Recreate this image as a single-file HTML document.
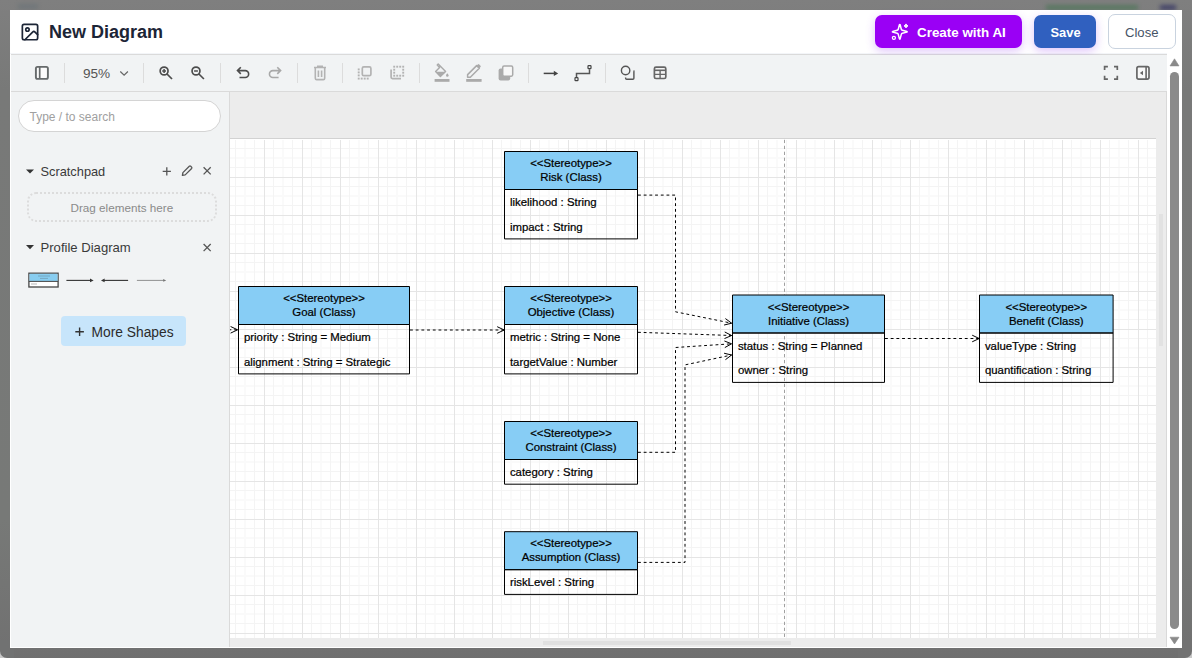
<!DOCTYPE html>
<html><head><meta charset="utf-8"><style>
*{box-sizing:border-box}
html,body{margin:0;padding:0}
body{width:1192px;height:658px;overflow:hidden;background:linear-gradient(#7f7f7f 0px,#787978 90px,#777977 520px,#717171 648px,#6f6f6f 658px);position:relative;font-family:"Liberation Sans", sans-serif}
.abs{position:absolute}
</style></head><body>
<div class="abs" style="left:0;top:648px;width:14px;height:10px;background:#c9c9c9"></div>
<div class="abs" style="left:0;top:640px;width:14px;height:18px;background:#717272;border-bottom-left-radius:7px"></div>
<div class="abs" style="left:1178px;top:648px;width:14px;height:10px;background:#c9c9c9"></div>
<div class="abs" style="left:1178px;top:640px;width:14px;height:18px;background:#727272;border-bottom-right-radius:7px"></div>
<div class="abs" style="left:1046px;top:5px;width:92px;height:5px;background:#4f7659;filter:blur(2px);opacity:.8"></div>
<div class="abs" style="left:1160px;top:5px;width:16px;height:5px;background:#3c3c66;filter:blur(2px);opacity:.9"></div>
<div class="abs" style="left:18px;top:4px;width:20px;height:5px;background:#6a7378;filter:blur(2px);opacity:.7"></div>
<div class="abs" style="left:10px;top:10px;width:1172px;height:638px;background:#fff"></div>
<!-- header -->
<div class="abs" style="left:10px;top:53px;width:1157px;height:1px;background:#f3f5f8"></div>
<div class="abs" style="left:11px;top:54px;width:1156px;height:1px;background:#dadada"></div>
<div class="abs" style="left:49px;top:19px;font-size:18px;font-weight:bold;color:#1c2536;line-height:26px;white-space:nowrap">New Diagram</div>
<div class="abs" style="left:875px;top:15px;width:147px;height:33px;border-radius:7px;background:#9a00f5;box-shadow:0 3px 10px rgba(150,60,240,.3)"></div>
<div class="abs" style="left:917px;top:24px;font-size:13.4px;font-weight:bold;color:#fff;line-height:17px;white-space:nowrap">Create with AI</div>
<div class="abs" style="left:1034px;top:15px;width:62px;height:33px;border-radius:7px;background:#3060bf;box-shadow:0 3px 10px rgba(150,60,240,.3)"></div>
<div class="abs" style="left:1050.5px;top:24px;font-size:12.9px;font-weight:bold;color:#fff;line-height:17px;white-space:nowrap">Save</div>
<div class="abs" style="left:1108px;top:14px;width:68px;height:35px;border-radius:7px;background:#fff;border:1px solid #c9d3df"></div>
<div class="abs" style="left:1125px;top:24px;font-size:13.1px;color:#465366;line-height:17px;white-space:nowrap">Close</div>
<!-- toolbar -->
<div class="abs" style="left:11px;top:55px;width:1156px;height:36px;background:#f1f3f4"></div>
<div class="abs" style="left:11px;top:91px;width:1156px;height:1px;background:#dadada"></div>
<div class="abs" style="left:83px;top:66px;font-size:13.6px;color:#555;line-height:16px;white-space:nowrap">95%</div>
<!-- sidebar -->
<div class="abs" style="left:11px;top:92px;width:218px;height:555px;background:#f1f3f4"></div>
<div class="abs" style="left:229px;top:92px;width:1px;height:555px;background:#dadada"></div>
<div class="abs" style="left:18px;top:100px;width:203px;height:32px;border-radius:16px;background:#fff;border:1px solid #d4d4d4"></div>
<div class="abs" style="left:29.5px;top:109.6px;font-size:12px;color:#a0a0a0;line-height:15px;white-space:nowrap">Type / to search</div>
<div class="abs" style="left:40.5px;top:164px;font-size:12.8px;color:#3a3a3a;line-height:16px;white-space:nowrap">Scratchpad</div>
<div class="abs" style="left:27px;top:192px;width:190px;height:30px;border-radius:9px;border:2px dotted #dcdcdc"></div>
<div class="abs" style="left:70.5px;top:200px;font-size:11.7px;color:#8a8a8a;line-height:15px;white-space:nowrap">Drag elements here</div>
<div class="abs" style="left:40.5px;top:240px;font-size:13.1px;color:#3a3a3a;line-height:16px;white-space:nowrap">Profile Diagram</div>
<div class="abs" style="left:61px;top:316px;width:125px;height:30px;border-radius:4px;background:#c7e5fb"></div>
<div class="abs" style="left:91.5px;top:323.7px;font-size:13.8px;color:#2b2b2b;line-height:17px;white-space:nowrap">More Shapes</div>
<!-- canvas -->
<div class="abs" style="left:230px;top:92px;width:937px;height:555px;background:#ececec"></div>
<svg class="abs" style="left:0;top:0" width="1192" height="658" viewBox="0 0 1192 658">
<defs><clipPath id="cv"><rect x="230" y="92" width="937" height="555"/></clipPath></defs>
<g clip-path="url(#cv)">
<rect x="230" y="138" width="926" height="1" fill="#d2d2d2"/>
<rect x="230" y="139" width="926" height="499" fill="#ffffff"/>
<rect x="244" y="140" width="1" height="498" fill="#fafafa"/>
<rect x="245" y="140" width="1" height="498" fill="#fafafa"/>
<rect x="282" y="140" width="1" height="498" fill="#fafafa"/>
<rect x="283" y="140" width="1" height="498" fill="#fafafa"/>
<rect x="320" y="140" width="1" height="498" fill="#fafafa"/>
<rect x="321" y="140" width="1" height="498" fill="#fafafa"/>
<rect x="358" y="140" width="1" height="498" fill="#fafafa"/>
<rect x="359" y="140" width="1" height="498" fill="#fafafa"/>
<rect x="396" y="140" width="1" height="498" fill="#fafafa"/>
<rect x="397" y="140" width="1" height="498" fill="#fafafa"/>
<rect x="434" y="140" width="1" height="498" fill="#fafafa"/>
<rect x="435" y="140" width="1" height="498" fill="#fafafa"/>
<rect x="472" y="140" width="1" height="498" fill="#fafafa"/>
<rect x="473" y="140" width="1" height="498" fill="#fafafa"/>
<rect x="510" y="140" width="1" height="498" fill="#fafafa"/>
<rect x="511" y="140" width="1" height="498" fill="#fafafa"/>
<rect x="548" y="140" width="1" height="498" fill="#fafafa"/>
<rect x="549" y="140" width="1" height="498" fill="#fafafa"/>
<rect x="586" y="140" width="1" height="498" fill="#fafafa"/>
<rect x="587" y="140" width="1" height="498" fill="#fafafa"/>
<rect x="624" y="140" width="1" height="498" fill="#fafafa"/>
<rect x="625" y="140" width="1" height="498" fill="#fafafa"/>
<rect x="662" y="140" width="1" height="498" fill="#fafafa"/>
<rect x="663" y="140" width="1" height="498" fill="#fafafa"/>
<rect x="700" y="140" width="1" height="498" fill="#fafafa"/>
<rect x="701" y="140" width="1" height="498" fill="#fafafa"/>
<rect x="738" y="140" width="1" height="498" fill="#fafafa"/>
<rect x="739" y="140" width="1" height="498" fill="#fafafa"/>
<rect x="776" y="140" width="1" height="498" fill="#fafafa"/>
<rect x="777" y="140" width="1" height="498" fill="#fafafa"/>
<rect x="814" y="140" width="1" height="498" fill="#fafafa"/>
<rect x="815" y="140" width="1" height="498" fill="#fafafa"/>
<rect x="852" y="140" width="1" height="498" fill="#fafafa"/>
<rect x="853" y="140" width="1" height="498" fill="#fafafa"/>
<rect x="890" y="140" width="1" height="498" fill="#fafafa"/>
<rect x="891" y="140" width="1" height="498" fill="#fafafa"/>
<rect x="928" y="140" width="1" height="498" fill="#fafafa"/>
<rect x="929" y="140" width="1" height="498" fill="#fafafa"/>
<rect x="966" y="140" width="1" height="498" fill="#fafafa"/>
<rect x="967" y="140" width="1" height="498" fill="#fafafa"/>
<rect x="1004" y="140" width="1" height="498" fill="#fafafa"/>
<rect x="1005" y="140" width="1" height="498" fill="#fafafa"/>
<rect x="1042" y="140" width="1" height="498" fill="#fafafa"/>
<rect x="1043" y="140" width="1" height="498" fill="#fafafa"/>
<rect x="1080" y="140" width="1" height="498" fill="#fafafa"/>
<rect x="1081" y="140" width="1" height="498" fill="#fafafa"/>
<rect x="1118" y="140" width="1" height="498" fill="#fafafa"/>
<rect x="1119" y="140" width="1" height="498" fill="#fafafa"/>
<rect x="230" y="157" width="926" height="1" fill="#fafafa"/>
<rect x="230" y="158" width="926" height="1" fill="#fafafa"/>
<rect x="230" y="195" width="926" height="1" fill="#fafafa"/>
<rect x="230" y="196" width="926" height="1" fill="#fafafa"/>
<rect x="230" y="233" width="926" height="1" fill="#fafafa"/>
<rect x="230" y="234" width="926" height="1" fill="#fafafa"/>
<rect x="230" y="271" width="926" height="1" fill="#fafafa"/>
<rect x="230" y="272" width="926" height="1" fill="#fafafa"/>
<rect x="230" y="309" width="926" height="1" fill="#fafafa"/>
<rect x="230" y="310" width="926" height="1" fill="#fafafa"/>
<rect x="230" y="347" width="926" height="1" fill="#fafafa"/>
<rect x="230" y="348" width="926" height="1" fill="#fafafa"/>
<rect x="230" y="385" width="926" height="1" fill="#fafafa"/>
<rect x="230" y="386" width="926" height="1" fill="#fafafa"/>
<rect x="230" y="423" width="926" height="1" fill="#fafafa"/>
<rect x="230" y="424" width="926" height="1" fill="#fafafa"/>
<rect x="230" y="461" width="926" height="1" fill="#fafafa"/>
<rect x="230" y="462" width="926" height="1" fill="#fafafa"/>
<rect x="230" y="499" width="926" height="1" fill="#fafafa"/>
<rect x="230" y="500" width="926" height="1" fill="#fafafa"/>
<rect x="230" y="537" width="926" height="1" fill="#fafafa"/>
<rect x="230" y="538" width="926" height="1" fill="#fafafa"/>
<rect x="230" y="575" width="926" height="1" fill="#fafafa"/>
<rect x="230" y="576" width="926" height="1" fill="#fafafa"/>
<rect x="230" y="613" width="926" height="1" fill="#fafafa"/>
<rect x="230" y="614" width="926" height="1" fill="#fafafa"/>
<rect x="235" y="140" width="1" height="498" fill="#f4f4f4"/>
<rect x="254" y="140" width="1" height="498" fill="#f4f4f4"/>
<rect x="273" y="140" width="1" height="498" fill="#f4f4f4"/>
<rect x="292" y="140" width="1" height="498" fill="#f4f4f4"/>
<rect x="311" y="140" width="1" height="498" fill="#f4f4f4"/>
<rect x="330" y="140" width="1" height="498" fill="#f4f4f4"/>
<rect x="349" y="140" width="1" height="498" fill="#f4f4f4"/>
<rect x="368" y="140" width="1" height="498" fill="#f4f4f4"/>
<rect x="387" y="140" width="1" height="498" fill="#f4f4f4"/>
<rect x="406" y="140" width="1" height="498" fill="#f4f4f4"/>
<rect x="425" y="140" width="1" height="498" fill="#f4f4f4"/>
<rect x="444" y="140" width="1" height="498" fill="#f4f4f4"/>
<rect x="463" y="140" width="1" height="498" fill="#f4f4f4"/>
<rect x="482" y="140" width="1" height="498" fill="#f4f4f4"/>
<rect x="501" y="140" width="1" height="498" fill="#f4f4f4"/>
<rect x="520" y="140" width="1" height="498" fill="#f4f4f4"/>
<rect x="539" y="140" width="1" height="498" fill="#f4f4f4"/>
<rect x="558" y="140" width="1" height="498" fill="#f4f4f4"/>
<rect x="577" y="140" width="1" height="498" fill="#f4f4f4"/>
<rect x="596" y="140" width="1" height="498" fill="#f4f4f4"/>
<rect x="615" y="140" width="1" height="498" fill="#f4f4f4"/>
<rect x="634" y="140" width="1" height="498" fill="#f4f4f4"/>
<rect x="653" y="140" width="1" height="498" fill="#f4f4f4"/>
<rect x="672" y="140" width="1" height="498" fill="#f4f4f4"/>
<rect x="691" y="140" width="1" height="498" fill="#f4f4f4"/>
<rect x="710" y="140" width="1" height="498" fill="#f4f4f4"/>
<rect x="729" y="140" width="1" height="498" fill="#f4f4f4"/>
<rect x="748" y="140" width="1" height="498" fill="#f4f4f4"/>
<rect x="767" y="140" width="1" height="498" fill="#f4f4f4"/>
<rect x="786" y="140" width="1" height="498" fill="#f4f4f4"/>
<rect x="805" y="140" width="1" height="498" fill="#f4f4f4"/>
<rect x="824" y="140" width="1" height="498" fill="#f4f4f4"/>
<rect x="843" y="140" width="1" height="498" fill="#f4f4f4"/>
<rect x="862" y="140" width="1" height="498" fill="#f4f4f4"/>
<rect x="881" y="140" width="1" height="498" fill="#f4f4f4"/>
<rect x="900" y="140" width="1" height="498" fill="#f4f4f4"/>
<rect x="919" y="140" width="1" height="498" fill="#f4f4f4"/>
<rect x="938" y="140" width="1" height="498" fill="#f4f4f4"/>
<rect x="957" y="140" width="1" height="498" fill="#f4f4f4"/>
<rect x="976" y="140" width="1" height="498" fill="#f4f4f4"/>
<rect x="995" y="140" width="1" height="498" fill="#f4f4f4"/>
<rect x="1014" y="140" width="1" height="498" fill="#f4f4f4"/>
<rect x="1033" y="140" width="1" height="498" fill="#f4f4f4"/>
<rect x="1052" y="140" width="1" height="498" fill="#f4f4f4"/>
<rect x="1071" y="140" width="1" height="498" fill="#f4f4f4"/>
<rect x="1090" y="140" width="1" height="498" fill="#f4f4f4"/>
<rect x="1109" y="140" width="1" height="498" fill="#f4f4f4"/>
<rect x="1128" y="140" width="1" height="498" fill="#f4f4f4"/>
<rect x="1147" y="140" width="1" height="498" fill="#f4f4f4"/>
<rect x="230" y="148" width="926" height="1" fill="#f4f4f4"/>
<rect x="230" y="167" width="926" height="1" fill="#f4f4f4"/>
<rect x="230" y="186" width="926" height="1" fill="#f4f4f4"/>
<rect x="230" y="205" width="926" height="1" fill="#f4f4f4"/>
<rect x="230" y="224" width="926" height="1" fill="#f4f4f4"/>
<rect x="230" y="243" width="926" height="1" fill="#f4f4f4"/>
<rect x="230" y="262" width="926" height="1" fill="#f4f4f4"/>
<rect x="230" y="281" width="926" height="1" fill="#f4f4f4"/>
<rect x="230" y="300" width="926" height="1" fill="#f4f4f4"/>
<rect x="230" y="319" width="926" height="1" fill="#f4f4f4"/>
<rect x="230" y="338" width="926" height="1" fill="#f4f4f4"/>
<rect x="230" y="357" width="926" height="1" fill="#f4f4f4"/>
<rect x="230" y="376" width="926" height="1" fill="#f4f4f4"/>
<rect x="230" y="395" width="926" height="1" fill="#f4f4f4"/>
<rect x="230" y="414" width="926" height="1" fill="#f4f4f4"/>
<rect x="230" y="433" width="926" height="1" fill="#f4f4f4"/>
<rect x="230" y="452" width="926" height="1" fill="#f4f4f4"/>
<rect x="230" y="471" width="926" height="1" fill="#f4f4f4"/>
<rect x="230" y="490" width="926" height="1" fill="#f4f4f4"/>
<rect x="230" y="509" width="926" height="1" fill="#f4f4f4"/>
<rect x="230" y="528" width="926" height="1" fill="#f4f4f4"/>
<rect x="230" y="547" width="926" height="1" fill="#f4f4f4"/>
<rect x="230" y="566" width="926" height="1" fill="#f4f4f4"/>
<rect x="230" y="585" width="926" height="1" fill="#f4f4f4"/>
<rect x="230" y="604" width="926" height="1" fill="#f4f4f4"/>
<rect x="230" y="623" width="926" height="1" fill="#f4f4f4"/>
<rect x="264" y="140" width="1" height="498" fill="#e5e5e5"/>
<rect x="302" y="140" width="1" height="498" fill="#e5e5e5"/>
<rect x="340" y="140" width="1" height="498" fill="#e5e5e5"/>
<rect x="378" y="140" width="1" height="498" fill="#e5e5e5"/>
<rect x="416" y="140" width="1" height="498" fill="#e5e5e5"/>
<rect x="454" y="140" width="1" height="498" fill="#e5e5e5"/>
<rect x="492" y="140" width="1" height="498" fill="#e5e5e5"/>
<rect x="530" y="140" width="1" height="498" fill="#e5e5e5"/>
<rect x="568" y="140" width="1" height="498" fill="#e5e5e5"/>
<rect x="606" y="140" width="1" height="498" fill="#e5e5e5"/>
<rect x="644" y="140" width="1" height="498" fill="#e5e5e5"/>
<rect x="682" y="140" width="1" height="498" fill="#e5e5e5"/>
<rect x="720" y="140" width="1" height="498" fill="#e5e5e5"/>
<rect x="758" y="140" width="1" height="498" fill="#e5e5e5"/>
<rect x="796" y="140" width="1" height="498" fill="#e5e5e5"/>
<rect x="834" y="140" width="1" height="498" fill="#e5e5e5"/>
<rect x="872" y="140" width="1" height="498" fill="#e5e5e5"/>
<rect x="910" y="140" width="1" height="498" fill="#e5e5e5"/>
<rect x="948" y="140" width="1" height="498" fill="#e5e5e5"/>
<rect x="986" y="140" width="1" height="498" fill="#e5e5e5"/>
<rect x="1024" y="140" width="1" height="498" fill="#e5e5e5"/>
<rect x="1062" y="140" width="1" height="498" fill="#e5e5e5"/>
<rect x="1100" y="140" width="1" height="498" fill="#e5e5e5"/>
<rect x="1138" y="140" width="1" height="498" fill="#e5e5e5"/>
<rect x="230" y="177" width="926" height="1" fill="#e5e5e5"/>
<rect x="230" y="215" width="926" height="1" fill="#e5e5e5"/>
<rect x="230" y="253" width="926" height="1" fill="#e5e5e5"/>
<rect x="230" y="291" width="926" height="1" fill="#e5e5e5"/>
<rect x="230" y="329" width="926" height="1" fill="#e5e5e5"/>
<rect x="230" y="367" width="926" height="1" fill="#e5e5e5"/>
<rect x="230" y="405" width="926" height="1" fill="#e5e5e5"/>
<rect x="230" y="443" width="926" height="1" fill="#e5e5e5"/>
<rect x="230" y="481" width="926" height="1" fill="#e5e5e5"/>
<rect x="230" y="519" width="926" height="1" fill="#e5e5e5"/>
<rect x="230" y="557" width="926" height="1" fill="#e5e5e5"/>
<rect x="230" y="595" width="926" height="1" fill="#e5e5e5"/>
<rect x="230" y="633" width="926" height="1" fill="#e5e5e5"/>
<line x1="784.5" y1="139.8" x2="784.5" y2="638" stroke="#a0a0a0" stroke-width="1" stroke-dasharray="3.3 2.65"/>
<g font-family='"Liberation Sans", sans-serif' font-size="11.4" fill="#000" stroke="#000" stroke-width="0.22">
<rect x="238.5" y="286.5" width="171.0" height="38" fill="#87cdf5" stroke="#000" stroke-width="1" stroke-linejoin="round"/>
<rect x="238.5" y="324.5" width="171.0" height="49.39999999999998" fill="none" stroke="#000" stroke-width="1" stroke-linejoin="round"/>
<text x="324.0" y="301.9" text-anchor="middle">&lt;&lt;Stereotype&gt;&gt;</text>
<text x="324.0" y="316" text-anchor="middle">Goal (Class)</text>
<text x="243.9" y="341.1">priority : String = Medium</text>
<text x="243.9" y="365.8">alignment : String = Strategic</text>
<rect x="504.5" y="151.5" width="133.0" height="38" fill="#87cdf5" stroke="#000" stroke-width="1" stroke-linejoin="round"/>
<rect x="504.5" y="189.5" width="133.0" height="49.400000000000006" fill="none" stroke="#000" stroke-width="1" stroke-linejoin="round"/>
<text x="571.0" y="166.9" text-anchor="middle">&lt;&lt;Stereotype&gt;&gt;</text>
<text x="571.0" y="181" text-anchor="middle">Risk (Class)</text>
<text x="509.9" y="206.1">likelihood : String</text>
<text x="509.9" y="230.79999999999998">impact : String</text>
<rect x="504.5" y="286.5" width="133.0" height="38" fill="#87cdf5" stroke="#000" stroke-width="1" stroke-linejoin="round"/>
<rect x="504.5" y="324.5" width="133.0" height="49.39999999999998" fill="none" stroke="#000" stroke-width="1" stroke-linejoin="round"/>
<text x="571.0" y="301.9" text-anchor="middle">&lt;&lt;Stereotype&gt;&gt;</text>
<text x="571.0" y="316" text-anchor="middle">Objective (Class)</text>
<text x="509.9" y="341.1">metric : String = None</text>
<text x="509.9" y="365.8">targetValue : Number</text>
<rect x="504.5" y="421.5" width="133.0" height="38" fill="#87cdf5" stroke="#000" stroke-width="1" stroke-linejoin="round"/>
<rect x="504.5" y="459.5" width="133.0" height="24.69999999999999" fill="none" stroke="#000" stroke-width="1" stroke-linejoin="round"/>
<text x="571.0" y="436.9" text-anchor="middle">&lt;&lt;Stereotype&gt;&gt;</text>
<text x="571.0" y="451" text-anchor="middle">Constraint (Class)</text>
<text x="509.9" y="476.1">category : String</text>
<rect x="504.5" y="531.7" width="133.0" height="38" fill="#87cdf5" stroke="#000" stroke-width="1" stroke-linejoin="round"/>
<rect x="504.5" y="569.7" width="133.0" height="24.700000000000045" fill="none" stroke="#000" stroke-width="1" stroke-linejoin="round"/>
<text x="571.0" y="547.1" text-anchor="middle">&lt;&lt;Stereotype&gt;&gt;</text>
<text x="571.0" y="561.2" text-anchor="middle">Assumption (Class)</text>
<text x="509.9" y="586.3000000000001">riskLevel : String</text>
<rect x="732.5" y="295.0" width="152.0" height="38" fill="#87cdf5" stroke="#000" stroke-width="1" stroke-linejoin="round"/>
<rect x="732.5" y="333.0" width="152.0" height="49.39999999999998" fill="none" stroke="#000" stroke-width="1" stroke-linejoin="round"/>
<text x="808.5" y="310.95" text-anchor="middle">&lt;&lt;Stereotype&gt;&gt;</text>
<text x="808.5" y="324.5" text-anchor="middle">Initiative (Class)</text>
<text x="737.9" y="349.6">status : String = Planned</text>
<text x="737.9" y="374.3">owner : String</text>
<rect x="979.5" y="295.0" width="133.5999999999999" height="38" fill="#87cdf5" stroke="#000" stroke-width="1" stroke-linejoin="round"/>
<rect x="979.5" y="333.0" width="133.5999999999999" height="49.39999999999998" fill="none" stroke="#000" stroke-width="1" stroke-linejoin="round"/>
<text x="1046.3" y="310.95" text-anchor="middle">&lt;&lt;Stereotype&gt;&gt;</text>
<text x="1046.3" y="324.5" text-anchor="middle">Benefit (Class)</text>
<text x="984.9" y="349.6">valueType : String</text>
<text x="984.9" y="374.3">quantification : String</text>
</g>
<path d="M638 195.1 L675.5 195.1 L675.5 311.8 L731.6 323.2" fill="none" stroke="#000" stroke-width="1" stroke-dasharray="2.85 2.85"/><path d="M724.08 325.04 L731.60 323.20 L725.40 318.57" fill="none" stroke="#000" stroke-width="1" stroke-linejoin="miter"/>
<path d="M638 332.3 L731.6 335.5" fill="none" stroke="#000" stroke-width="1" stroke-dasharray="2.85 2.85"/><path d="M724.49 338.56 L731.60 335.50 L724.72 331.96" fill="none" stroke="#000" stroke-width="1" stroke-linejoin="miter"/>
<path d="M638 452.3 L675.5 452.3 L675.5 347.5 L731.6 343.8" fill="none" stroke="#000" stroke-width="1" stroke-dasharray="2.85 2.85"/><path d="M724.83 347.55 L731.60 343.80 L724.40 340.97" fill="none" stroke="#000" stroke-width="1" stroke-linejoin="miter"/>
<path d="M638 562.4 L685 562.4 L685 364.9 L731.6 355" fill="none" stroke="#000" stroke-width="1" stroke-dasharray="2.85 2.85"/><path d="M725.44 359.68 L731.60 355.00 L724.07 353.23" fill="none" stroke="#000" stroke-width="1" stroke-linejoin="miter"/>
<path d="M410 330 L504.2 330" fill="none" stroke="#000" stroke-width="1" stroke-dasharray="2.85 2.85"/><path d="M497.20 333.30 L504.20 330.00 L497.20 326.70" fill="none" stroke="#000" stroke-width="1" stroke-linejoin="miter"/>
<path d="M885 338.5 L979.2 338.5" fill="none" stroke="#000" stroke-width="1" stroke-dasharray="2.85 2.85"/><path d="M972.20 341.80 L979.20 338.50 L972.20 335.20" fill="none" stroke="#000" stroke-width="1" stroke-linejoin="miter"/>
<path d="M200 329.8 L237.6 329.8" fill="none" stroke="#000" stroke-width="1" stroke-dasharray="2.85 2.85"/><path d="M230.60 333.10 L237.60 329.80 L230.60 326.50" fill="none" stroke="#000" stroke-width="1" stroke-linejoin="miter"/>
</g>
</svg>
<!-- scrollbars -->
<div class="abs" style="left:1167px;top:55px;width:15px;height:592px;background:#fff"></div>
<div class="abs" style="left:1170px;top:71.5px;width:9px;height:557px;border-radius:4.5px;background:#8a8a8a"></div>
<div class="abs" style="left:543px;top:641px;width:248px;height:4px;background:#e0e0e0"></div>
<div class="abs" style="left:1159px;top:214px;width:4px;height:132px;background:#e2e2e2"></div>
<div class="abs" style="left:1166px;top:91px;width:1px;height:556px;background:#d9d9d9"></div>
<svg class="abs" style="left:0;top:0;pointer-events:none" width="1192" height="658" viewBox="0 0 1192 658">
<!-- header image icon -->
<g transform="translate(19.8,21.9) scale(0.85)" fill="none" stroke="#1c2536" stroke-width="2" stroke-linecap="round" stroke-linejoin="round">
<rect x="3" y="3" width="18" height="18" rx="2"/><circle cx="9" cy="9" r="2"/><path d="m21 15-3.086-3.086a2 2 0 0 0-2.828 0L6 21"/>
</g>
<!-- sparkles -->
<g fill="none" stroke="#fff" stroke-width="1.5" stroke-linejoin="round" stroke-linecap="round">
<path transform="translate(890.9,22.9) scale(0.74)" stroke-width="2.03" d="M9.937 15.5A2 2 0 0 0 8.5 14.063l-6.135-1.582a.5.5 0 0 1 0-.962L8.5 9.936A2 2 0 0 0 9.937 8.5l1.582-6.135a.5.5 0 0 1 .963 0L14.063 8.5A2 2 0 0 0 15.5 9.937l6.135 1.581a.5.5 0 0 1 0 .964L15.5 14.063a2 2 0 0 0-1.437 1.437l-1.582 6.135a.5.5 0 0 1-.963 0z"/>
<circle cx="893.9" cy="37.8" r="1.55" stroke-width="1.25"/>
</g>
<path d="M906 23.9 Q906.3 25.6 908 25.9 Q906.3 26.2 906 27.9 Q905.7 26.2 904 25.9 Q905.7 25.6 906 23.9Z" fill="#fff" stroke="#fff" stroke-width="1" stroke-linejoin="round"/>
<!-- toolbar separators -->
<g fill="#dcdcdc">
<rect x="64" y="63" width="1" height="20"/><rect x="143" y="63" width="1" height="20"/><rect x="220" y="63" width="1" height="20"/>
<rect x="297" y="63" width="1" height="20"/><rect x="342" y="63" width="1" height="20"/><rect x="419" y="63" width="1" height="20"/>
<rect x="528" y="63" width="1" height="20"/><rect x="605" y="63" width="1" height="20"/>
</g>
<!-- sidebar toggle -->
<rect x="35.9" y="66.9" width="12" height="12" rx="1.6" fill="#fbfbfb" stroke="#666a6b" stroke-width="1.9"/>
<line x1="39.7" y1="67" x2="39.7" y2="79" stroke="#666a6b" stroke-width="1.7"/>
<!-- chevron -->
<path d="M120.3 71.5 L124.1 75.2 L127.9 71.5" fill="none" stroke="#666" stroke-width="1.2"/>
<!-- zoom in/out -->
<g fill="none" stroke="#4d4d4d" stroke-width="1.7">
<circle cx="164.1" cy="71" r="3.95"/><path d="M167 74 L172 79"/><path d="M162.2 71 H166 M164.1 69.1 V72.9" stroke-width="1.5"/>
<circle cx="196" cy="71" r="3.95"/><path d="M198.9 74 L203.9 79"/><path d="M194.1 71 H197.9" stroke-width="1.5"/>
</g>
<!-- undo redo -->
<path d="M240.8 67.3 L237.5 70.6 L240.8 73.9 M237.5 70.6 H245.2 A3.45 3.45 0 0 1 245.2 77.5 H239.5" fill="none" stroke="#4d4d4d" stroke-width="1.6"/>
<path d="M277.3 67.3 L280.6 70.6 L277.3 73.9 M280.6 70.6 H272.9 A3.45 3.45 0 0 0 272.9 77.5 H278.6" fill="none" stroke="#a8a8a8" stroke-width="1.6"/>
<!-- trash -->
<g fill="none" stroke="#b3b3b3" stroke-width="1.6">
<path d="M314 67.5 H326 M317.8 67.5 V66.2 H322.2 V67.5"/>
<path d="M315.3 68 V78.2 Q315.3 79.6 316.7 79.6 H323.3 Q324.7 79.6 324.7 78.2 V68"/>
<path d="M318.4 70.5 V77 M321.6 70.5 V77"/>
</g>
<!-- to front -->
<rect x="362.3" y="66.9" width="8.6" height="8.8" rx="1.5" fill="none" stroke="#b3b3b3" stroke-width="1.7"/>
<g fill="#b3b3b3">
<rect x="357.75" y="68.45" width="1.9" height="1.9"/><rect x="357.75" y="71.45" width="1.9" height="1.9"/><rect x="357.75" y="74.45" width="1.9" height="1.9"/>
<rect x="357.75" y="77.65" width="1.9" height="1.9"/><rect x="360.75" y="77.65" width="1.9" height="1.9"/><rect x="363.75" y="77.65" width="1.9" height="1.9"/><rect x="366.75" y="77.65" width="1.9" height="1.9"/>
</g>
<!-- to back -->
<path d="M391.1 69.5 V77.3 Q391.1 78.6 392.4 78.6 H401" fill="none" stroke="#b3b3b3" stroke-width="1.7"/>
<g fill="#b3b3b3">
<rect x="393.25" y="65.75" width="1.9" height="1.9"/><rect x="396.25" y="65.75" width="1.9" height="1.9"/><rect x="399.25" y="65.75" width="1.9" height="1.9"/><rect x="402.25" y="65.75" width="1.9" height="1.9"/>
<rect x="402.25" y="68.75" width="1.9" height="1.9"/><rect x="402.25" y="71.75" width="1.9" height="1.9"/><rect x="402.25" y="74.75" width="1.9" height="1.9"/>
<rect x="393.25" y="68.75" width="1.9" height="1.9"/><rect x="393.25" y="71.75" width="1.9" height="1.9"/><rect x="393.25" y="74.75" width="1.9" height="1.9"/>
<rect x="396.25" y="74.75" width="1.9" height="1.9"/><rect x="399.25" y="74.75" width="1.9" height="1.9"/>
</g>
<!-- fill color -->
<g fill="#aaaaaa" stroke="none">
<path d="M438.2 64.1 L437.2 65.1 L439.6 67.5 L435.6 71.5 L440.4 76.5 L445.6 71.5 Z" fill="none" stroke="#aaa" stroke-width="1.4" stroke-linejoin="round"/>
<path d="M436.2 71.8 H445.2 L440.4 76.5 Z"/>
<path d="M447.3 73.2 Q446 74.8 446 75.4 A1.3 1.3 0 0 0 448.6 75.4 Q448.6 74.8 447.3 73.2Z"/>
<rect x="434.6" y="79" width="14.9" height="2.8"/>
<rect x="466.2" y="79" width="15.4" height="2.8"/>
</g>
<!-- pencil -->
<path d="M467.6 77.3 V74.6 L476.6 65.6 L479.3 68.3 L470.3 77.3 Z" fill="none" stroke="#aaa" stroke-width="1.5" stroke-linejoin="round"/>
<path d="M476.6 65.6 L477.8 64.4 Q478.5 63.8 479.2 64.4 L480.5 65.7 Q481.1 66.4 480.5 67.1 L479.3 68.3 Z" fill="#aaa"/>
<!-- shadow -->
<rect x="498.6" y="68.4" width="11.6" height="12" rx="2" fill="#aaa"/>
<rect x="502.7" y="66" width="10" height="10.2" rx="1.4" fill="#f7f7f7" stroke="#aaa" stroke-width="1.5"/>
<!-- connection arrow -->
<path d="M543.7 73.4 H554.5" stroke="#444" stroke-width="1.5"/>
<path d="M553.8 70.8 L558.2 73.4 L553.8 76 Z" fill="#444"/>
<!-- waypoints -->
<path d="M576.5 77.5 V73.4 H589.5 V69.3" fill="none" stroke="#555" stroke-width="1.5"/>
<rect x="575" y="77.6" width="3" height="3" rx="0.6" fill="none" stroke="#444" stroke-width="1.2"/>
<rect x="588" y="65.6" width="3" height="3" rx="0.6" fill="none" stroke="#444" stroke-width="1.2"/>
<!-- insert shape -->
<circle cx="625.6" cy="70.5" r="4.2" fill="none" stroke="#555" stroke-width="1.4"/>
<path d="M633.6 70.6 Q633.9 70.6 633.9 71 V78.2 Q633.9 79.3 632.8 79.3 H626.7 Q625.6 79.3 625.6 78.2 V77.6" fill="none" stroke="#555" stroke-width="1.4"/>
<!-- table -->
<rect x="654.4" y="67.1" width="11.4" height="11.4" rx="1.6" fill="#f4f4f4" stroke="#666" stroke-width="1.7"/>
<path d="M654.6 70.3 H665.6" stroke="#666" stroke-width="1.6"/>
<path d="M655 74.4 H665.3 M660.1 70 V78.5" stroke="#666" stroke-width="1.4"/>
<!-- fullscreen -->
<path d="M1104.6 70 V66.7 H1107.9 M1114 66.7 H1117.3 V70 M1117.3 75.8 V79.1 H1114 M1107.9 79.1 H1104.6 V75.8" fill="none" stroke="#666" stroke-width="1.7"/>
<!-- format panel -->
<rect x="1136.9" y="66.7" width="12.1" height="12.4" rx="1.8" fill="#f8f8f8" stroke="#666" stroke-width="1.7"/>
<rect x="1145.3" y="67" width="1.6" height="12" fill="#666"/>
<path d="M1143 70.8 V75.2 L1139.9 73 Z" fill="#666"/>
<!-- scrollbar arrows -->
<path d="M1174.5 58.8 L1179 65.9 H1170 Z" fill="#8a8a8a" stroke="#8a8a8a" stroke-width="0.6" stroke-linejoin="round"/>
<path d="M1174.5 644 L1179 637.2 H1170 Z" fill="#8a8a8a" stroke="#8a8a8a" stroke-width="0.6" stroke-linejoin="round"/>
<!-- sidebar carets -->
<path d="M26 169.4 H34 L30 173.6 Z" fill="#333"/>
<path d="M26 245 H34 L30 249.2 Z" fill="#333"/>
<!-- scratchpad icons -->
<path d="M166.8 167.3 V175.5 M162.7 171.4 H170.9" stroke="#555" stroke-width="1.3"/>
<path d="M182.3 191.2" />
<path d="M182.4 175.4 L182.9 172.6 L189.3 166.2 Q190 165.6 190.7 166.2 L191.6 167.1 Q192.2 167.8 191.6 168.5 L185.2 174.9 Z" fill="none" stroke="#555" stroke-width="1.3" stroke-linejoin="round"/>
<path d="M203.6 167.3 L210.7 174.4 M210.7 167.3 L203.6 174.4" stroke="#555" stroke-width="1.3"/>
<path d="M203.6 244 L210.7 251.1 M210.7 244 L203.6 251.1" stroke="#555" stroke-width="1.3"/>
<!-- shape thumbnails -->
<rect x="28.9" y="273.2" width="29.2" height="13.8" fill="#fff" stroke="#444" stroke-width="1.3"/>
<rect x="29.5" y="273.8" width="28" height="7.3" fill="#88cdf0"/>
<path d="M28.9 281.4 H58.1" stroke="#444" stroke-width="1"/>
<path d="M38 276 H50 M40 278.4 H48" stroke="#6a8ea3" stroke-width="0.6"/>
<path d="M31 284 H37" stroke="#888" stroke-width="0.6"/>
<path d="M66.4 280.4 H91" stroke="#333" stroke-width="1.1"/>
<path d="M90 278.6 L93.6 280.4 L90 282.2 Z" fill="#333"/>
<path d="M104 280.4 H128.1" stroke="#333" stroke-width="1.1"/>
<path d="M104.6 278.6 L101 280.4 L104.6 282.2 Z" fill="#333"/>
<path d="M136.9 280.4 H164" stroke="#777" stroke-width="0.8"/>
<path d="M163.2 279 L166.2 280.4 L163.2 281.8 Z" fill="#777"/>
<!-- more shapes plus -->
<path d="M79.6 327.4 V336 M75.3 331.7 H83.9" stroke="#333" stroke-width="1.4"/>
</svg>

</body></html>
